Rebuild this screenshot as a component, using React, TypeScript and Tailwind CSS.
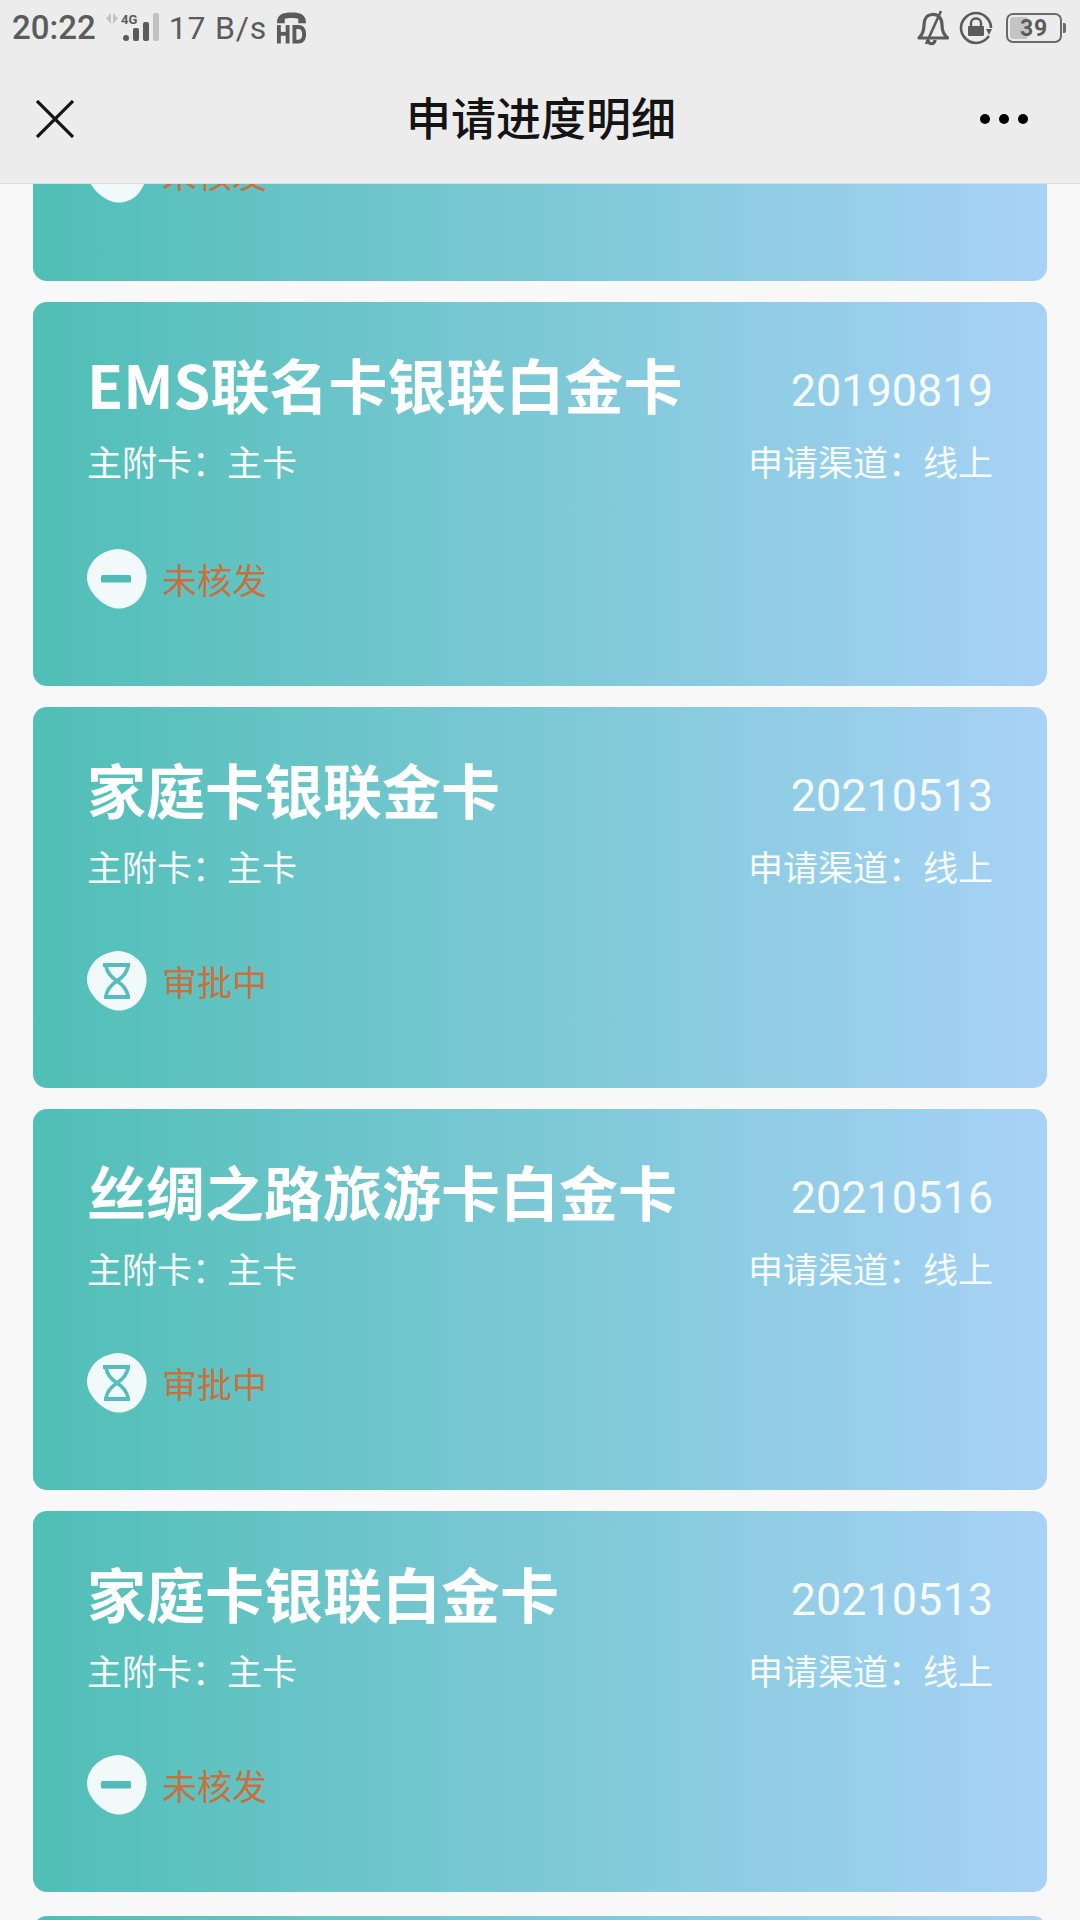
import React from "react";

const sans = "font-['Noto_Sans_CJK_SC','Noto_Sans',sans-serif]";

function Blob({ kind }: { kind: "minus" | "hour" }) {
  return (
    <svg width="62" height="62" viewBox="0 0 62 62" className="shrink-0 ml-[-1px]">
      <path
        d="M31 1C38 0.5 47 4 53 10.5C59 17 61 24 60.5 31C60 39 57 47 51 53C45 59 37 61 31 60.5C25 60 18 56.5 12 51C6 45 1 38 1 29.5C1 21 6 12.5 13 7.5C19 3.5 25 1.5 31 1Z"
        fill="#f1f9fa"
      />
      {kind === "minus" ? (
        <rect x="15" y="27" width="30" height="7.5" rx="1.5" fill="#4fbcb8" />
      ) : (
        <g fill="none" stroke="#55bdbd" strokeWidth="3.6" strokeLinejoin="round">
          <path d="M17 15H44" strokeWidth="4" />
          <path d="M18 47H44" strokeWidth="4" />
          <path d="M20 16C21 23 25 27 31 31C37 27 41 23 42 16" />
          <path d="M20 46C21 39 25 35 31 31C37 35 41 39 42 46" />
        </g>
      )}
    </svg>
  );
}

function Card({
  title,
  date,
  status,
  kind,
  hClass,
  gapClass,
}: {
  title: string;
  date: string;
  status: string;
  kind: "minus" | "hour";
  hClass: string;
  gapClass: string;
}) {
  return (
    <div className={`${hClass} mx-[33px] rounded-[14px] bg-[linear-gradient(90deg,#50bfb6,#a8d2f6)] px-[54px] text-white shrink-0`}>
      <div className="flex items-center justify-between pt-[50px] h-[114px]">
        <span className="text-[59px] leading-[64px] font-bold">{title}</span>
        <span className="font-['Roboto'] text-[45px] leading-[60px] text-[#f6fcfd] mt-[14px]">{date}</span>
      </div>
      <div className="flex items-center justify-between mt-[23px] h-[44px] text-[35px] leading-[44px] text-[#f6fcfc]">
        <span>主附卡：主卡</span>
        <span>申请渠道：线上</span>
      </div>
      <div className={`flex items-center gap-[14px] ${gapClass}`}>
        <Blob kind={kind} />
        <span className="text-[35px] leading-[44px] text-[#c9703f]">{status}</span>
      </div>
    </div>
  );
}

export default function App() {
  return (
    <div className={`${sans} relative w-[1080px] h-[1920px] overflow-hidden bg-[#f8f8f8] flex flex-col`}>
      <header className="h-[184px] shrink-0 bg-[#ececec] border-b border-[#dcdcdc] z-10">
        <div className="flex items-center justify-between h-[56px] pl-[12px] pr-[14px] text-[#5b5b5b]">
          <div className="flex items-center">
            <span className="font-['Roboto'] font-medium text-[33px] leading-[56px] mt-[-1px]">20:22</span>
            <svg width="60" height="34" viewBox="0 0 60 34" className="ml-[7px] mb-[2px]">
              <path d="M3 8L8 3V14L3 8ZM10 3L15 8L10 14Z" fill="#c4c4c4" />
              <text x="18" y="14" fontSize="13" fontWeight="700" fill="#5b5b5b" fontFamily="Roboto">4G</text>
              <circle cx="23" cy="28" r="3" fill="#5b5b5b" />
              <rect x="30" y="18" width="6" height="13" rx="2" fill="#5b5b5b" />
              <rect x="40" y="12" width="6" height="19" rx="2" fill="#5b5b5b" />
              <rect x="50" y="3" width="6" height="28" rx="2" fill="#c2c2c2" />
            </svg>
            <span className="font-['Roboto'] text-[32px] leading-[56px] ml-[6px] tracking-[0.8px]">17 B/s</span>
            <svg width="31" height="34" viewBox="0 0 32 34" className="ml-[9px]">
              <path d="M1 12C1 3 7 1 16 1S31 3 31 12H23V7.5C20 6.5 12 6.5 9 7.5V12Z" fill="#5b5b5b" />
              <rect x="1" y="14" width="4" height="19" fill="#5b5b5b" />
              <rect x="10" y="14" width="4" height="19" fill="#5b5b5b" />
              <rect x="3" y="21" width="9" height="4" fill="#5b5b5b" />
              <path d="M17 14H23C28 14 31 17 31 23.5C31 30 28 33 23 33H17ZM21 18V29H23C26 29 27 27 27 23.5C27 20 26 18 23 18Z" fill="#5b5b5b" />
            </svg>
          </div>
          <div className="flex items-center">
            <svg width="32" height="36" viewBox="0 0 32 36" fill="none" stroke="#5b5b5b" strokeWidth="3.2">
              <path d="M2 28C6 24 7 19 7 15C7 8 10 5 15 4.5C21 4 25 8 25 15C25 20 27 25 30.5 28Z" strokeLinejoin="round" />
              <path d="M24 1L9 34" strokeWidth="2.6" />
              <path d="M11 30C11 35 18 35 18 30" />
            </svg>
            <svg width="34" height="34" viewBox="0 0 34 34" fill="none" className="ml-[10px]">
              <path d="M30 25C27 29 22 32 17 32C9 32 2 25 2 17S9 2 17 2 32 9 32 17" stroke="#5b5b5b" strokeWidth="2.6" />
              <path d="M27 18H33L30 24Z" fill="#5b5b5b" />
              <path d="M12 15V12C12 6 22 6 22 12V15" stroke="#5b5b5b" strokeWidth="2.4" />
              <rect x="9" y="15" width="16" height="10" rx="1" fill="#5b5b5b" />
            </svg>
            <div className="relative ml-[13px] w-[56px] h-[30px] rounded-[7px] border-[2px] border-[#6a6a6a] overflow-hidden flex items-center justify-center">
              <div className="absolute left-[2px] top-[2px] bottom-[2px] w-[18px] rounded-[3px] bg-[#c4c4c4]" />
              <span className="relative font-['Roboto'] font-bold text-[23px] leading-none text-[#5b5b5b] tracking-[0.8px]">39</span>
            </div>
            <div className="w-[3px] h-[10px] ml-[1px] rounded-r-[2px] bg-[#6a6a6a]" />
          </div>
        </div>
        <div className="relative flex items-center justify-between h-[127px] pl-[36px] pr-[52px] pt-[14px]">
          <svg width="38" height="38" viewBox="0 0 38 38" stroke="#141414" strokeWidth="3.2" className="mt-[-16px]">
            <path d="M1 1L37 37M37 1L1 37" />
          </svg>
          <span className="absolute left-0 right-0 text-center text-[45px] leading-[60px] font-medium text-[#141414] top-[31px] pl-[2px]">申请进度明细</span>
          <div className="flex gap-[9px] mt-[-16px]">
            <div className="w-[10px] h-[10px] rounded-full bg-black" />
            <div className="w-[10px] h-[10px] rounded-full bg-black" />
            <div className="w-[10px] h-[10px] rounded-full bg-black" />
          </div>
        </div>
      </header>
      <main className="flex flex-col gap-[21px] flex-1 overflow-hidden">
        <div className="h-[97px] shrink-0 mx-[33px] rounded-b-[14px] bg-[linear-gradient(90deg,#50bfb6,#a8d2f6)] overflow-hidden px-[54px]">
          <div className="flex items-center gap-[14px] mt-[-42px]">
            <Blob kind="minus" />
            <span className="text-[35px] leading-[44px] text-[#c9703f]">未核发</span>
          </div>
        </div>
        <Card hClass="h-[384px]" gapClass="mt-[65px]" title="EMS联名卡银联白金卡" date="20190819" status="未核发" kind="minus" />
        <Card hClass="h-[381px]" gapClass="mt-[62px]" title="家庭卡银联金卡" date="20210513" status="审批中" kind="hour" />
        <Card hClass="h-[381px]" gapClass="mt-[62px]" title="丝绸之路旅游卡白金卡" date="20210516" status="审批中" kind="hour" />
        <Card hClass="h-[381px]" gapClass="mt-[62px]" title="家庭卡银联白金卡" date="20210513" status="未核发" kind="minus" />
        <div className="h-[20px] shrink-0 mt-[3px] mx-[33px] rounded-t-[14px] bg-[linear-gradient(90deg,#50bfb6,#a8d2f6)]" />
      </main>
    </div>
  );
}
